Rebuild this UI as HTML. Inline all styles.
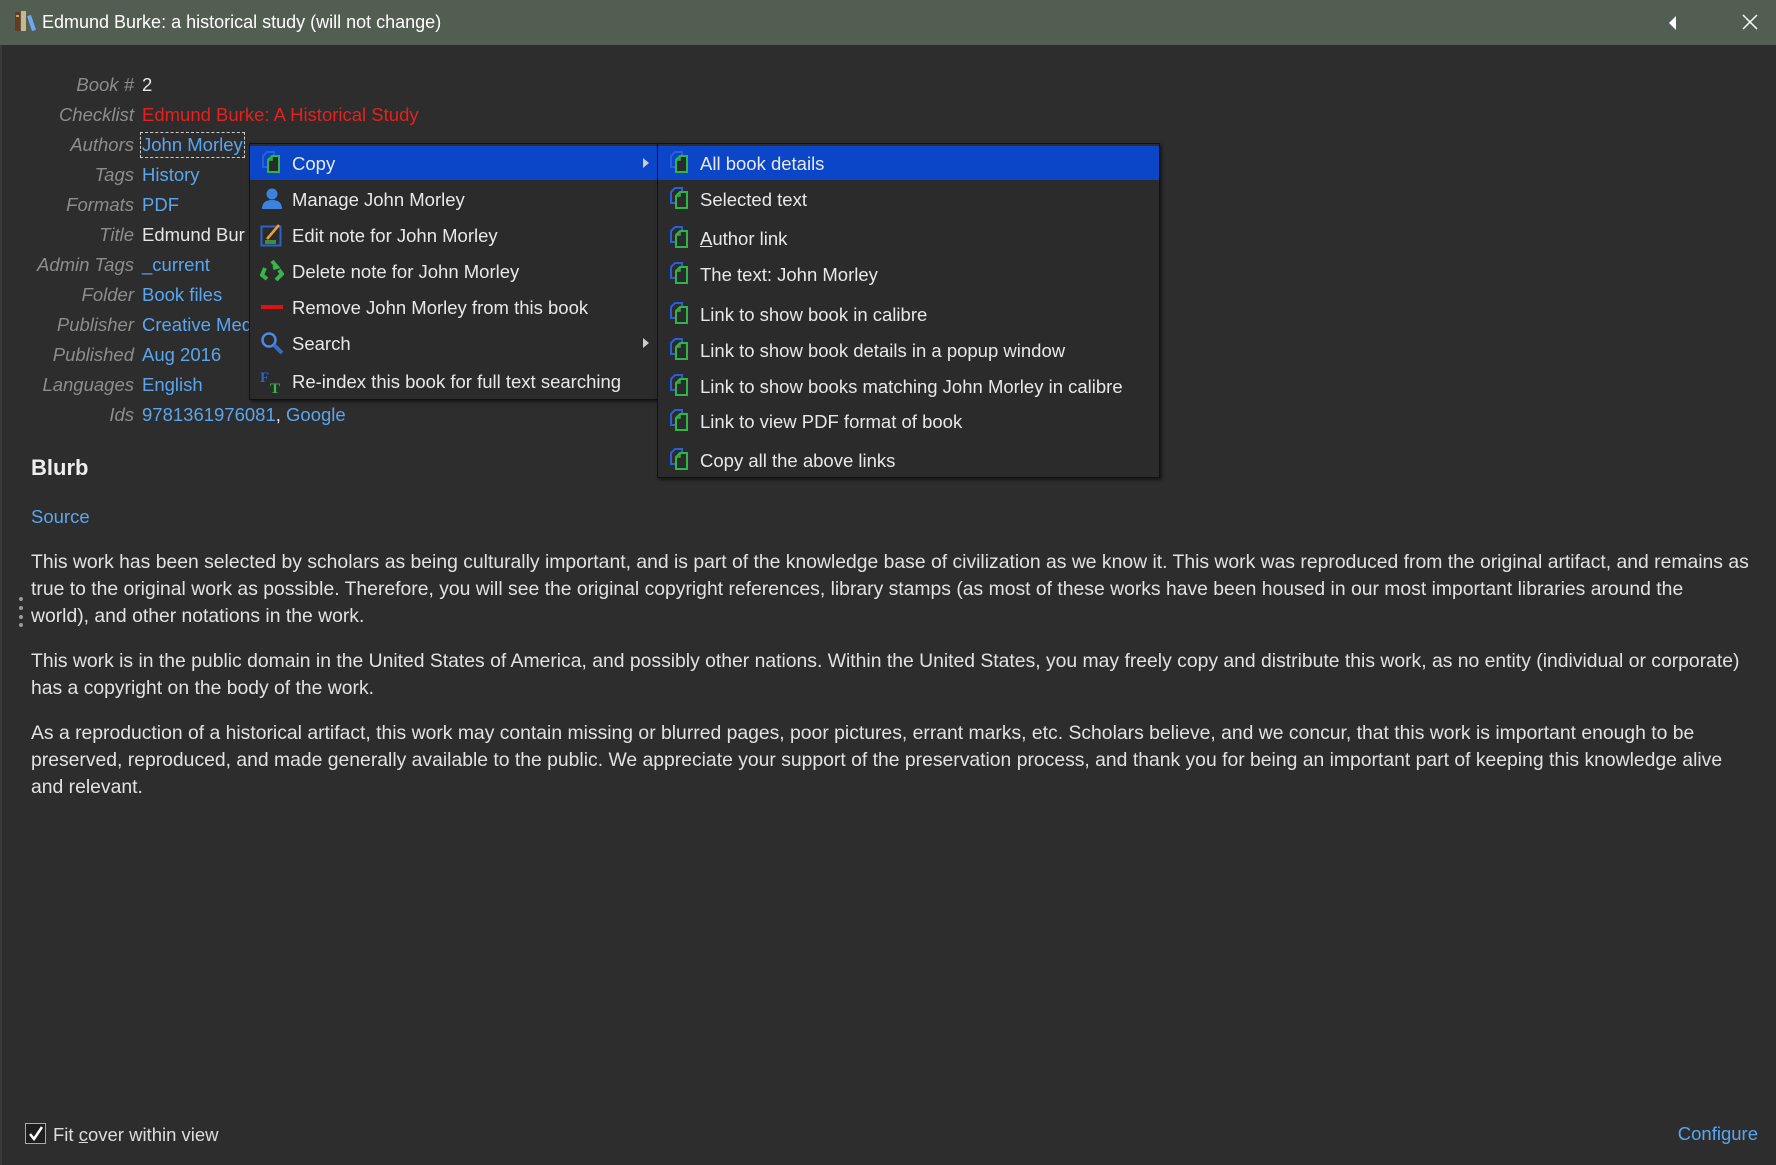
<!DOCTYPE html>
<html><head><meta charset="utf-8"><style>
*{margin:0;padding:0;box-sizing:border-box}
body{width:1776px;height:1165px;background:#2d2d2d;font-family:"Liberation Sans",sans-serif;color:#e6e6e6;position:relative;overflow:hidden;font-size:18.5px}
.tb{position:absolute;left:0;top:0;width:1776px;height:45px;background:#535e53;}
.tb .t{position:absolute;left:42px;top:12px;font-size:18px;color:#fff}
.lb{position:absolute;right:1642px;font-style:italic;color:#8d8d8d;white-space:nowrap}
.v{position:absolute;left:142px;white-space:nowrap;color:#5aa6ee}
.a{color:#5aa6ee}
.p{position:absolute;left:31px;white-space:nowrap;color:#e2e2e2;font-size:19.35px}
.menu{position:absolute;background:#2b2b2b;border:1px solid #111;box-shadow:2px 2px 3px rgba(0,0,0,.5)}
.it{position:absolute;left:0;right:0;height:34px;}
.it span{position:absolute;left:42px;top:7px;white-space:nowrap;color:#e8e8e8}
.it svg{position:absolute;left:10px;top:5px}
.hl{background:#0b46c8}
.arr{position:absolute;right:8px;top:12px;width:0;height:0;border-left:6px solid #ccc;border-top:5px solid transparent;border-bottom:5px solid transparent}
</style></head><body>
<div class="tb">
<svg style="position:absolute;left:14px;top:10px" width="24" height="22"><rect x="1" y="2" width="5" height="19" fill="#6b3a1a"/><rect x="2" y="5" width="3" height="2" fill="#d9a04a"/><rect x="7" y="1" width="5" height="20" fill="#c9b78a"/><path d="M13 6 L17 5 L22 20 L18 21Z" fill="#6fa8f0"/></svg>
<div class="t">Edmund Burke: a historical study (will not change)</div>
<div style="position:absolute;left:1669px;top:16px;width:0;height:0;border-right:7px solid #fff;border-top:7px solid transparent;border-bottom:7px solid transparent"></div>
<svg style="position:absolute;left:1742px;top:14px" width="16" height="16"><path d="M1 1L15 15M15 1L1 15" stroke="#fff" stroke-width="1.5"/></svg>
</div>
<div style="position:absolute;left:0;top:45px;width:2px;height:1120px;background:#3a3a3a"></div>

<div class="lb" style="top:74px">Book #</div><div class="v" style="top:74px;color:#e6e6e6">2</div>
<div class="lb" style="top:104px">Checklist</div><div class="v" style="top:104px;color:#e8201c">Edmund Burke: A Historical Study</div>
<div class="lb" style="top:134px">Authors</div><div class="v" style="top:132px;left:140px;border:1px dashed #ccc;padding:1px 1px">John Morley</div>
<div class="lb" style="top:164px">Tags</div><div class="v" style="top:164px">History</div>
<div class="lb" style="top:194px">Formats</div><div class="v" style="top:194px">PDF</div>
<div class="lb" style="top:224px">Title</div><div class="v" style="top:224px;color:#e6e6e6">Edmund Bur</div>
<div class="lb" style="top:254px">Admin Tags</div><div class="v" style="top:254px">_current</div>
<div class="lb" style="top:284px">Folder</div><div class="v" style="top:284px">Book files</div>
<div class="lb" style="top:314px">Publisher</div><div class="v" style="top:314px">Creative Med</div>
<div class="lb" style="top:344px">Published</div><div class="v" style="top:344px">Aug 2016</div>
<div class="lb" style="top:374px">Languages</div><div class="v" style="top:374px">English</div>
<div class="lb" style="top:404px">Ids</div><div class="v" style="top:404px">9781361976081<span style="color:#e6e6e6">, </span>Google</div>

<div style="position:absolute;left:31px;top:455px;font-weight:bold;font-size:22px;color:#eee">Blurb</div>
<div class="a" style="position:absolute;left:31px;top:506px">Source</div>
<div class="p" style="top:551px">This work has been selected by scholars as being culturally important, and is part of the knowledge base of civilization as we know it. This work was reproduced from the original artifact, and remains as</div>
<div class="p" style="top:578px">true to the original work as possible. Therefore, you will see the original copyright references, library stamps (as most of these works have been housed in our most important libraries around the</div>
<div class="p" style="top:605px">world), and other notations in the work.</div>
<div class="p" style="top:650px">This work is in the public domain in the United States of America, and possibly other nations. Within the United States, you may freely copy and distribute this work, as no entity (individual or corporate)</div>
<div class="p" style="top:677px">has a copyright on the body of the work.</div>
<div class="p" style="top:722px">As a reproduction of a historical artifact, this work may contain missing or blurred pages, poor pictures, errant marks, etc. Scholars believe, and we concur, that this work is important enough to be</div>
<div class="p" style="top:749px">preserved, reproduced, and made generally available to the public. We appreciate your support of the preservation process, and thank you for being an important part of keeping this knowledge alive</div>
<div class="p" style="top:776px">and relevant.</div>
<svg style="position:absolute;left:18px;top:596px" width="6" height="32"><circle cx="3" cy="3" r="2" fill="#999"/><circle cx="3" cy="12" r="2" fill="#999"/><circle cx="3" cy="21" r="2" fill="#999"/><circle cx="3" cy="29" r="2" fill="#999"/></svg>

<svg width="0" height="0" style="position:absolute"><defs>
<g id="cp"><path d="M3 5 L7 1 H14 V16 H3Z" fill="none" stroke="#2b5fd8" stroke-width="2"/><path d="M8 9 L12 5 H19 V21 H8Z" fill="#2b2b2b" stroke="#2fb44a" stroke-width="2"/><path d="M8 9 H12 V5" fill="none" stroke="#2fb44a" stroke-width="1.5"/></g>
</defs></svg>

<div class="menu" style="left:249px;top:143px;width:409px;height:257px">
<div class="it hl" style="top:2px"><svg width="24" height="24"><use href="#cp"/></svg><span>Copy</span><div class="arr"></div></div>
<div class="it" style="top:38px"><svg width="24" height="24"><circle cx="12" cy="7" r="5.5" fill="#3a82e0"/><path d="M2 22 Q2 13 12 13 Q22 13 22 22Z" fill="#3a82e0"/></svg><span>Manage John Morley</span></div>
<div class="it" style="top:74px"><svg width="24" height="24"><rect x="1.5" y="3.5" width="19" height="19" fill="none" stroke="#2b62c8" stroke-width="2"/><path d="M7 16 L19 2" stroke="#f0a030" stroke-width="2.5"/><path d="M5 18H16M5 20H16" stroke="#3cb04a" stroke-width="1.5"/></svg><span>Edit note for John Morley</span></div>
<div class="it" style="top:110px"><svg width="24" height="24"><path d="M12 2 L17 8 L13 9 M5 9 L2 16 L7 20 M16 21 L22 15 L19 11" fill="none" stroke="#35b54a" stroke-width="4"/></svg><span>Delete note for John Morley</span></div>
<div class="it" style="top:146px"><svg width="24" height="24"><rect x="1" y="10" width="22" height="4" fill="#e01010"/></svg><span>Remove John Morley from this book</span></div>
<div class="it" style="top:182px"><svg width="24" height="24"><circle cx="9" cy="9" r="6.5" fill="none" stroke="#4a8ae0" stroke-width="2.5"/><path d="M14 14 L22 22" stroke="#2f6ed0" stroke-width="4"/></svg><span>Search</span><div class="arr"></div></div>
<div class="it" style="top:220px"><svg width="24" height="26"><text x="0" y="13" font-family="Liberation Serif" font-size="15" fill="#2b62c8" font-weight="bold">F</text><text x="10" y="24" font-family="Liberation Serif" font-size="15" fill="#35b54a" font-weight="bold">T</text></svg><span>Re-index this book for full text searching</span></div>
</div>

<div class="menu" style="left:657px;top:143px;width:503px;height:335px">
<div class="it hl" style="top:2px"><svg width="24" height="24"><use href="#cp"/></svg><span>All book details</span></div>
<div class="it" style="top:38px"><svg width="24" height="24"><use href="#cp"/></svg><span>Selected text</span></div>
<div class="it" style="top:77px"><svg width="24" height="24"><use href="#cp"/></svg><span><u>A</u>uthor link</span></div>
<div class="it" style="top:113px"><svg width="24" height="24"><use href="#cp"/></svg><span>The text: John Morley</span></div>
<div class="it" style="top:153px"><svg width="24" height="24"><use href="#cp"/></svg><span>Link to show book in calibre</span></div>
<div class="it" style="top:189px"><svg width="24" height="24"><use href="#cp"/></svg><span>Link to show book details in a popup window</span></div>
<div class="it" style="top:225px"><svg width="24" height="24"><use href="#cp"/></svg><span>Link to show books matching John Morley in calibre</span></div>
<div class="it" style="top:260px"><svg width="24" height="24"><use href="#cp"/></svg><span>Link to view PDF format of book</span></div>
<div class="it" style="top:299px"><svg width="24" height="24"><use href="#cp"/></svg><span>Copy all the above links</span></div>
</div>

<div style="position:absolute;left:25px;top:1123px;width:21px;height:21px;border:1px solid #aaa;background:#1e1e1e"></div>
<svg style="position:absolute;left:27px;top:1125px" width="18" height="18"><path d="M3 9 L7 14 L15 2" fill="none" stroke="#fff" stroke-width="2.5"/></svg>
<div style="position:absolute;left:53px;top:1124px;color:#ddd">Fit <u>c</u>over within view</div>
<div class="a" style="position:absolute;right:18px;top:1123px">Configure</div>
</body></html>
